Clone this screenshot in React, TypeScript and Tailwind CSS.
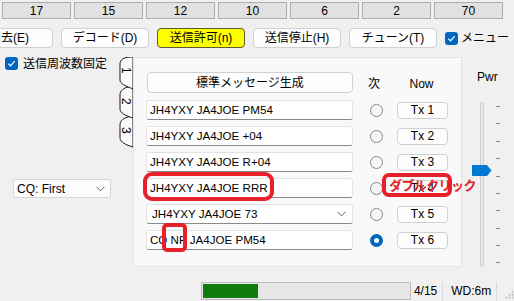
import React from "react";

const FONT = '"Liberation Sans", "Noto Sans CJK JP", sans-serif';

function Check() {
  return (
    <div className="w-[13px] h-[13px] rounded-[3px] bg-[#0067c0] flex items-center justify-center shrink-0">
      <svg width="9" height="9" viewBox="0 0 9 9">
        <path d="M1.5 4.8 L3.6 6.8 L7.6 2.2" fill="none" stroke="white" strokeWidth="1.2" />
      </svg>
    </div>
  );
}

function Radio({ on }: { on?: boolean }) {
  if (on)
    return (
      <div className="w-[13px] h-[13px] rounded-full bg-[#0067c0] flex items-center justify-center">
        <div className="w-[5px] h-[5px] rounded-full bg-white" />
      </div>
    );
  return <div className="w-[13px] h-[13px] rounded-full border border-[#868686] bg-[#f6f6f6]" />;
}

function Chevron() {
  return (
    <svg width="9" height="6" viewBox="0 0 9 6">
      <path d="M0.5 0.8 L4.5 4.8 L8.5 0.8" fill="none" stroke="#606060" strokeWidth="1" />
    </svg>
  );
}

const rows = [
  { t: "JH4YXY JA4JOE PM54" },
  { t: "JH4YXY JA4JOE +04" },
  { t: "JH4YXY JA4JOE R+04" },
  { t: "JH4YXY JA4JOE RRR" },
  { t: "JH4YXY JA4JOE 73", drop: true },
  { t: "CQ NP JA4JOE PM54", sel: true },
];

export default function App() {
  const nums = ["17", "15", "12", "10", "6", "2", "70"];
  const ticks = [106, 123, 141, 158, 176, 193, 210, 228, 245, 262];
  return (
    <div
      className="relative w-[514px] h-[301px] overflow-hidden bg-[#f0f0f0] text-[12px] text-black"
      style={{ fontFamily: FONT }}
    >
      {/* Row 1 */}
      <div className="flex gap-[3px] pl-[2px] pt-[2px]">
        {nums.map((n) => (
          <div
            key={n}
            className="w-[69px] h-[17px] bg-[#e1e1e1] border border-[#adadad] flex items-center justify-center leading-none text-[12px]"
          >
            {n}
          </div>
        ))}
      </div>

      {/* Row 2 */}
      <div className="flex items-center gap-[8px] ml-[-35px] mt-[9px]">
        {[
          ["消去(E)", false],
          ["デコード(D)", false],
          ["送信許可(n)", true],
          ["送信停止(H)", false],
          ["チューン(T)", false],
        ].map(([t, y]) => (
          <div
            key={t as string}
            className={
              "w-[88px] h-[20px] rounded-[4px] flex items-center justify-center leading-none " +
              (y ? "bg-[#ffff00] border border-[#5c5c2a]" : "bg-[#fdfdfd] border border-[#d0d0d0]")
            }
          >
            {t}
          </div>
        ))}
        <div className="flex items-center gap-[3px]">
          <Check />
          <span className="leading-none">メニュー</span>
        </div>
      </div>

      {/* Main */}
      <div className="flex mt-[9px] h-[210px]">
        {/* Left column */}
        <div className="w-[116px] flex flex-col pl-[5px]">
          <div className="flex items-center gap-[5px] h-[13px]">
            <Check />
            <span className="leading-none">送信周波数固定</span>
          </div>
          <div className="mt-[109px] ml-[8px] w-[98px] h-[19px] bg-[#fdfdfd] border border-[#d6d6d6] rounded-[2px] flex items-center justify-between pl-[3px] pr-[5px]">
            <span className="leading-none">CQ: First</span>
            <Chevron />
          </div>
        </div>

        {/* Tabs */}
        <div className="relative w-[17px]">
          <svg width="17" height="100" viewBox="116 57 17 100" className="absolute left-0 top-0">
            <path d="M133,116 C126,117 121,119 120,124 L120,138 C120,142 126,145 133,147 Z" fill="#fafafa" stroke="#1a1a1a" strokeWidth="1" />
            <path d="M133,86 C126,87 121,89 120,94 L120,109 C120,113 126,116 133,118 Z" fill="#fafafa" stroke="#1a1a1a" strokeWidth="1" />
            <path d="M133,57 C126,57 121,58 120,63 L120,80 C120,84 126,86 133,89 Z" fill="#fafafa" stroke="#1a1a1a" strokeWidth="1" />
          </svg>
          <div className="absolute left-[4px] top-[10px] text-[12px] leading-none [writing-mode:vertical-rl]">1</div>
          <div className="absolute left-[4px] top-[41px] text-[12px] leading-none [writing-mode:vertical-rl]">2</div>
          <div className="absolute left-[4px] top-[70px] text-[12px] leading-none [writing-mode:vertical-rl]">3</div>
        </div>

        {/* Panel */}
        <div className="w-[329px] h-[210px] bg-[#f9f9f9] border border-[#e3e3e3] pl-[12px] pt-[14px]">
          <div className="flex items-center h-[21px]">
            <div className="ml-[1px] w-[206px] h-[21px] bg-[#fdfdfd] border border-[#d0d0d0] rounded-[4px] flex items-center justify-center leading-none">
              標準メッセージ生成
            </div>
            <div className="ml-[15px] w-[12px] text-center leading-none mt-[2px]">次</div>
            <div className="ml-[16px] w-[51px] text-center leading-none mt-[2px]">Now</div>
          </div>
          <div className="flex flex-col gap-[6px] mt-[7px]">
            {rows.map((r, i) => (
              <div key={i} className="flex items-center h-[20px]">
                <div
                  className={
                    "w-[207px] h-[20px] bg-white border border-[#e2e2e2] border-b-[#8a8a8a] rounded-[3px] flex items-center justify-between leading-none text-[11.6px] pr-[6px] " +
                    (r.drop ? "pl-[5px]" : "pl-[3px]")
                  }
                >
                  <span>{r.t}</span>
                  {r.drop && <Chevron />}
                </div>
                <div className="ml-[17px]">
                  <Radio on={r.sel} />
                </div>
                <div className="ml-[14px] w-[51px] h-[17px] bg-[#fdfdfd] border border-[#d0d0d0] rounded-[4px] flex items-center justify-center leading-none">
                  Tx {i + 1}
                </div>
              </div>
            ))}
          </div>
        </div>

        {/* Right slider column */}
        <div className="relative flex-1">
          <div className="absolute left-[15px] top-[14px] leading-none">Pwr</div>
          <div className="absolute left-[18px] top-[45px] w-[4px] h-[165px] bg-[#e6e6e6] border border-[#cfcfcf] rounded-[2px]" />
          {ticks.map((y) => (
            <div key={y} className="absolute left-[34px] w-[4px] h-[1px] bg-[#8c8c8c]" style={{ top: y - 57 }} />
          ))}
          <svg width="20" height="12" viewBox="0 0 20 12" className="absolute left-[10px] top-[108px]">
            <path d="M1 0 H15 L19.5 5.5 L15 11 H1 Q0 11 0 10 V1 Q0 0 1 0 Z" fill="#0078d4" />
          </svg>
        </div>
      </div>

      {/* Status bar */}
      <div className="flex items-center mt-[15px] pl-[201px] h-[18px]">
        <div className="w-[215px] h-[18px] bg-[#e6e6e6] border border-[#bcbcbc] p-[1px]">
          <div className="w-[55px] h-full bg-[#107c10]" />
        </div>
        <span className="ml-[3px] leading-none">4/15</span>
        <div className="ml-[5px] w-[1px] h-[19px] bg-[#d8d8d8]" />
        <span className="ml-[8px] leading-none">WD:6m</span>
        <div className="ml-[5px] w-[1px] h-[19px] bg-[#d8d8d8]" />
        <svg width="10" height="10" viewBox="0 0 10 10" className="ml-[7px] mt-[6px]">
          {[[8, 2], [8, 5], [5, 5], [8, 8], [5, 8], [2, 8]].map(([x, y], k) => (
            <rect key={k} x={x} y={y} width="1.5" height="1.5" fill="#b0b0b0" />
          ))}
        </svg>
      </div>

      {/* Red annotations */}
      <div className="absolute left-[143px] top-[172px] w-[131px] h-[29px] border-[4px] border-[#e8202a] rounded-[9px]" />
      <div className="absolute left-[162px] top-[223px] w-[25px] h-[29px] border-[4px] border-[#e8202a] rounded-[5px]" />
      <div className="absolute left-[382px] top-[173px] w-[70px] h-[24px] border-[4px] border-[#e8202a] rounded-[7px]" />
      <div
        className="absolute left-[389px] top-[178px] text-[13px] font-bold leading-none text-[#e8202a] tracking-[-0.6px]"
        style={{ fontFamily: '"Noto Sans CJK JP", sans-serif' }}
      >
        ダブルクリック
      </div>
    </div>
  );
}
